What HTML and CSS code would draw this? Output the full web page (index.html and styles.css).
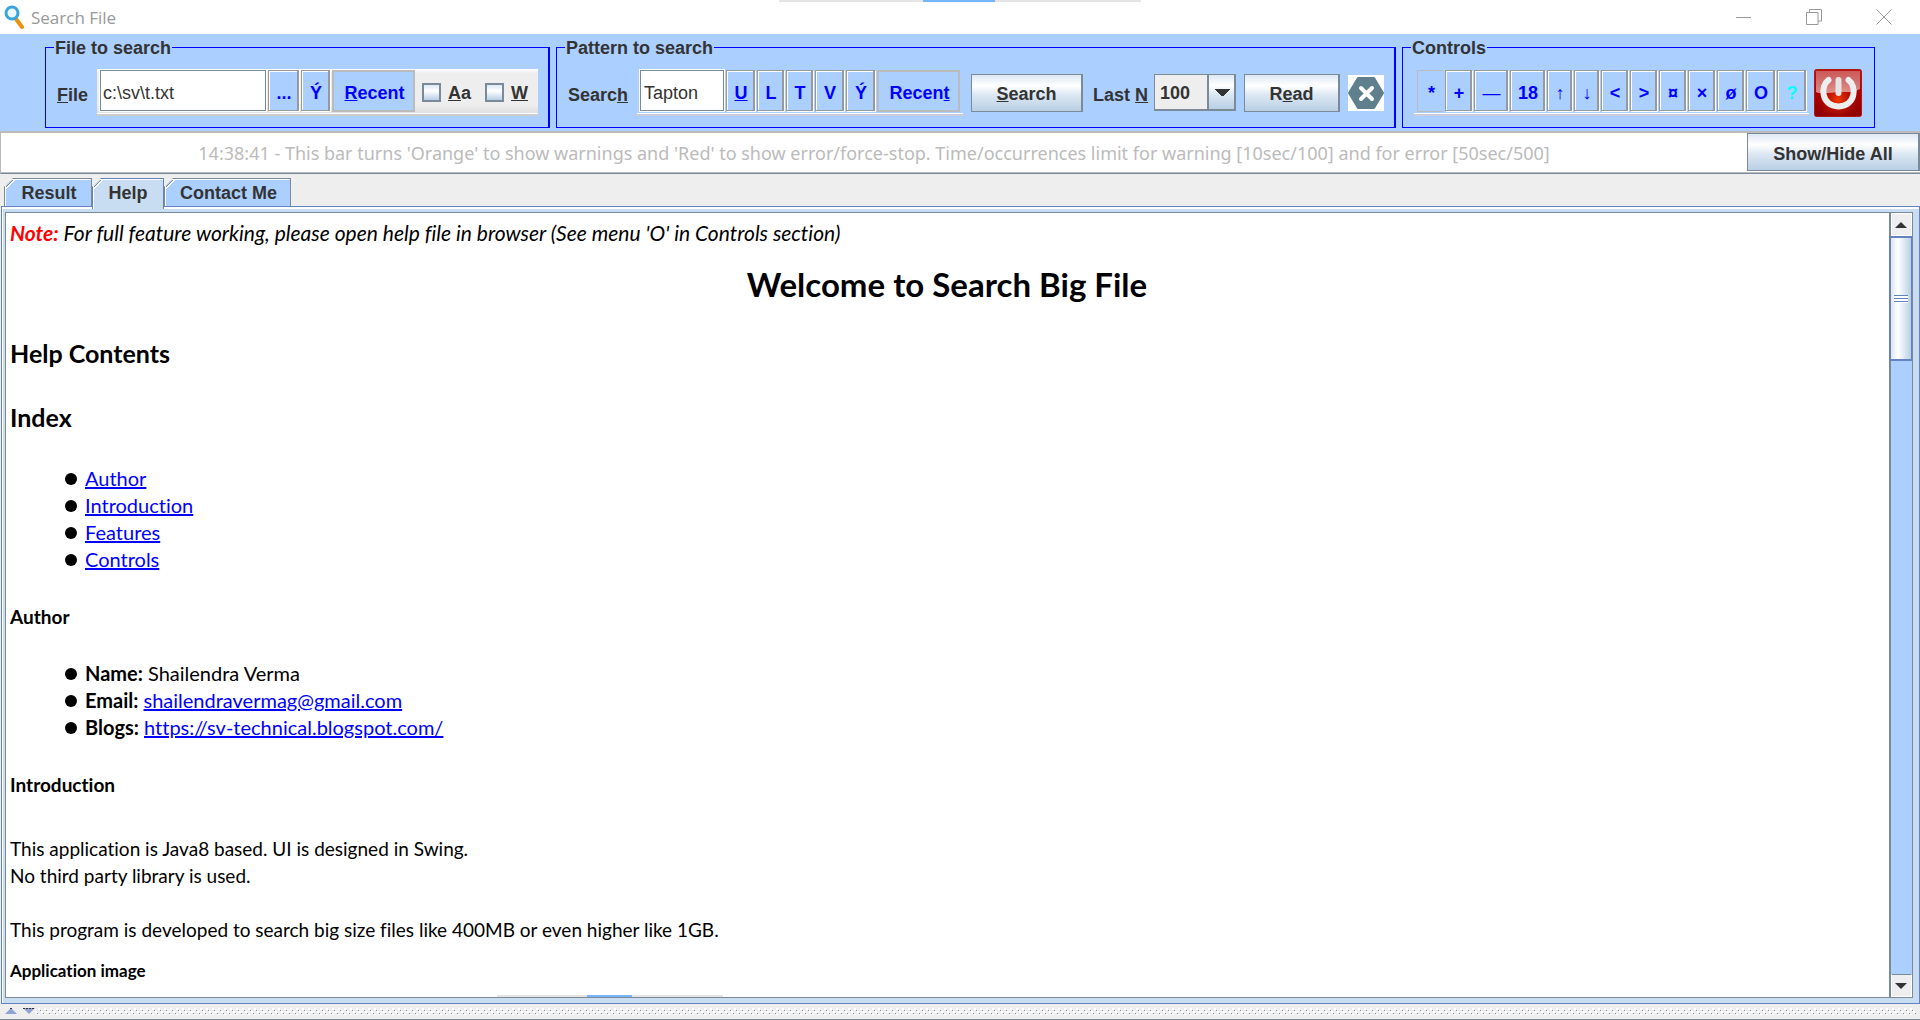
FILE: index.html
```html
<!DOCTYPE html>
<html lang="en">
<head>
<meta charset="utf-8">
<title>Search File</title>
<link rel="stylesheet" href="styles.css">
</head>
<body>
<div class="window">
  <header class="titlebar">
    <svg class="app-icon" width="20" height="24" viewBox="0 0 20 24"><path d="M12 14l6 8" stroke="#e8940f" stroke-width="4" stroke-linecap="round"/><circle cx="8" cy="8" r="6" fill="#eef8fd" stroke="#38a5dc" stroke-width="3"/></svg>
    <h1 class="app-name">Search File</h1>
    <div class="accent"><i></i></div>
    <div class="window-buttons">
      <button aria-label="Minimize"><svg width="16" height="16"><path d="M0 8.500h15"/></svg></button>
      <button aria-label="Restore"><svg width="16" height="16"><path d="M.5 3.500h11.500v12H.5zM3.500 3.500v-3h12v11.500h-3.500"/></svg></button>
      <button aria-label="Close"><svg width="16" height="16"><path d="M.5.5l15 15M15.500.5l-15 15"/></svg></button>
    </div>
  </header>

  <div class="toolbar">
    <fieldset class="group group-file">
      <legend>File to search</legend>
      <label class="text" for="file"><u>F</u>ile</label>
      <div class="strip strip-light">
        <input class="field field-file" id="file" type="text" value="c:\sv\t.txt">
        <button class="key w31">...</button>
        <button class="key w29">Ý</button>
        <button class="flat"><u>R</u>ecent</button>
        <label class="check"><input type="checkbox"><span><u>A</u>a</span></label>
        <label class="check"><input type="checkbox"><span><u>W</u></span></label>
      </div>
    </fieldset>

    <fieldset class="group group-pattern">
      <legend>Pattern to search</legend>
      <label class="text" for="pattern">Searc<u>h</u></label>
      <div class="strip">
        <input class="field field-pattern" id="pattern" type="text" value="Tapton">
        <button class="key w29"><u>U</u></button>
        <button class="key w27">L</button>
        <button class="key w27">T</button>
        <button class="key w29">V</button>
        <button class="key w29">Ý</button>
        <button class="flat">Recen<u>t</u></button>
      </div>
      <button class="metal search"><u>S</u>earch</button>
      <label class="text" for="lastn">Last <u>N</u></label>
      <select class="combo" id="lastn"><option>100</option></select>
      <button class="metal read">R<u>e</u>ad</button>
      <button class="stop" aria-label="Stop"><svg width="36" height="36" viewBox="0 0 36 36"><path d="M10 3h16l9 15-9 15H10L1 18z" fill="#5f7f8d" stroke="#5f7f8d" stroke-width="2" stroke-linejoin="round"/><path d="M13 13l11 11M24 13L13 24" stroke="#fff" stroke-width="4" stroke-linecap="round"/></svg></button>
    </fieldset>

    <fieldset class="group group-controls">
      <legend>Controls</legend>
      <div class="strip strip-keys">
        <button class="flat star">*</button>
        <button class="key w27">+</button>
        <button class="key w34 thin">—</button>
        <button class="key w35">18</button>
        <button class="key w25">↑</button>
        <button class="key w25">↓</button>
        <button class="key w27">&lt;</button>
        <button class="key w27">&gt;</button>
        <button class="key w27">¤</button>
        <button class="key w27">×</button>
        <button class="key w27">ø</button>
        <button class="key w29">O</button>
        <button class="key w29 help">?</button>
      </div>
      <button class="power" aria-label="Exit"><svg width="48" height="48" viewBox="0 0 48 48"><defs><linearGradient id="red" x1="0" y1="0" x2="0" y2="1"><stop offset="0" stop-color="#b81414"/><stop offset=".5" stop-color="#a00"/><stop offset="1" stop-color="#8c0000"/></linearGradient><radialGradient id="glow" cx=".5" cy=".65" r=".45"><stop offset="0" stop-color="#f04000"/><stop offset="1" stop-color="#c01000" stop-opacity="0"/></radialGradient><linearGradient id="gloss" x1="0" y1="0" x2="0" y2="1"><stop offset="0" stop-color="#fff" stop-opacity=".3"/><stop offset="1" stop-color="#fff" stop-opacity=".55"/></linearGradient></defs><rect x=".5" y=".5" width="47" height="47" rx="2" fill="url(#red)" stroke="#b01818"/><rect x="1" y="1" width="46" height="46" fill="url(#glow)"/><path d="M2 2h44v18c-7 4-12 3-20 3S8 26 2 23z" fill="url(#gloss)"/><path d="M14.500 11C6 17 7 37 24.500 37.500 42 37 43 17 34.500 11" fill="none" stroke="#eee" stroke-width="6" stroke-linecap="round"/><path d="M24.500 11v13" stroke="#e4e4e4" stroke-width="6" stroke-linecap="round"/></svg></button>
    </fieldset>
  </div>

  <div class="statusbar">
    <output class="status">14:38:41 - This bar turns 'Orange' to show warnings and 'Red' to show error/force-stop. Time/occurrences limit for warning [10sec/100] and for error [50sec/500]</output>
    <button class="metal toggle">Show/Hide All</button>
  </div>

  <nav class="tabs">
    <button class="tab tab-result">Result</button>
    <button class="tab tab-help active">Help</button>
    <button class="tab tab-contact">Contact Me</button>
  </nav>

  <main class="panel">
    <div class="view">
      <article class="doc">
        <p class="note"><b>Note:</b> For full feature working, please open help file in browser (See menu 'O' in Controls section)</p>
        <h1>Welcome to Search Big File</h1>
        <h2>Help Contents</h2>
        <h2>Index</h2>
        <ul>
          <li><a href="#author">Author</a></li>
          <li><a href="#introduction">Introduction</a></li>
          <li><a href="#features">Features</a></li>
          <li><a href="#controls">Controls</a></li>
        </ul>
        <h3 id="author">Author</h3>
        <ul>
          <li><b>Name:</b> Shailendra Verma</li>
          <li><b>Email:</b> <a href="mailto:shailendravermag@gmail.com">shailendravermag@gmail.com</a></li>
          <li><b>Blogs:</b> <a href="https://sv-technical.blogspot.com/">https://sv-technical.blogspot.com/</a></li>
        </ul>
        <h3 id="introduction">Introduction</h3>
        <p class="body">This application is Java8 based. UI is designed in Swing.<br>No third party library is used.<br><br>This program is developed to search big size files like 400MB or even higher like 1GB.</p>
        <h4>Application image</h4>
      </article>
      <div class="doc-accent"><i></i></div>
      <div class="scrollbar">
        <button class="arrow" aria-label="Scroll up"><svg width="12" height="6"><path d="M6 0l6 6H0z"/></svg></button>
        <div class="thumb"><i class="grip"></i></div>
        <button class="arrow arrow-down" aria-label="Scroll down"><svg width="12" height="6"><path d="M0 0h12L6 6z"/></svg></button>
      </div>
    </div>
  </main>

  <footer class="divider">
    <svg width="30" height="7" viewBox="0 0 30 7"><path d="M0 6l6-6 6 6z" fill="#8ea4d2"/><path d="M18 0h12l-6 6z" fill="#8ea4d2"/><path d="M5 .5h3M18 .5h12" stroke="#333" stroke-dasharray="2 1"/></svg>
    <i class="bumps"></i>
  </footer>
</div>
</body>
</html>
```
FILE: styles.css
```css
* { box-sizing: border-box; }
body { margin: 0; background: #eee; color: #333; font: bold 18px/20px "Liberation Sans", Arial, sans-serif; }
button, input, select { font: inherit; color: inherit; margin: 0; padding: 0; border: 0; border-radius: 0; background: none; }
.window { display: flex; flex-direction: column; min-height: 100vh; }

.titlebar { display: flex; align-items: center; height: 34px; background: #fff; position: relative; padding: 0 28px 0 4px; }
.app-icon { fill: none; }
.app-name { margin: 0 auto 0 7px; padding-top: 2px; font: 17px/24px "Open Sans", sans-serif; color: #999; }
.accent { position: absolute; top: 0; left: 779px; width: 362px; height: 2px; background: #e5e5e5; }
.accent i { display: block; margin-left: 144px; width: 72px; height: 2px; background: #78b6fb; }
.window-buttons { display: flex; gap: 54px; }
.window-buttons button { width: 16px; height: 16px; }
.window-buttons svg { display: block; fill: none; stroke: #999; }

.toolbar { display: flex; justify-content: center; gap: 6px; height: 97px; padding: 2px 0 0; background: #abcfff; }
.group { display: flex; align-items: center; position: relative; margin: 0; padding: 0 8px; border: 1px solid #00f; border-right-width: 2px; min-width: 0; height: 92px; }
.group legend { padding: 0 1px; height: 22px; line-height: 24px; }
.group-file { width: 505px; }
.group-pattern { width: 840px; }
.group-controls { width: 473px; border-right-width: 1px; }
.text { white-space: nowrap; padding: 4px 0 0 3px; }
.strip { display: flex; align-items: flex-start; gap: 2px; height: 47px; padding: 1px 3px; border-bottom: 2px solid #ccd; box-shadow: inset 0 -1px #fff; margin: 0 8px 0 9px; }
.strip-light { margin: 0 0 0 9px; background: linear-gradient(#fff, #eee 4px, #eee 80%, #ddd); border-bottom-color: #ccc; padding-right: 10px; }
.field { height: 41px; padding: 5px 4px 0 3px; font-weight: normal; background: #fff; border: 1px solid #7a8a99; outline: 1px solid #fff; }
.field-file { width: 166px; padding: 5px 2px 0; }
.field-pattern { width: 84px; }
.key, .flat { height: 41px; padding: 4px 0 0 2px; background: #abcfff; color: #00f; border: 1px solid #999; border-right-width: 2px; box-shadow: inset 1px 1px #fff, 1px 1px #fff; }
.flat { width: 83px; height: 42px; border: 2px solid #bbb; box-shadow: none; }
.w25 { width: 25px; } .w27 { width: 27px; } .w29 { width: 29px; } .w31 { width: 31px; } .w34 { width: 34px; } .w35 { width: 35px; }
.thin { font-weight: normal; }
.help { color: #0ff; }
.star { width: 26px; border-width: 1px 0 1px 1px; }
.check { display: flex; align-items: center; height: 42px; gap: 7px; margin-left: 5px; padding-top: 2px; }
.check + .check { margin-left: 12px; }
.check span { padding-top: 2px; }
.check input { appearance: none; width: 19px; height: 19px; border: 2px solid #7a8a99; background: linear-gradient(#dde8f3, #fff 40%, #b8cfe5); }
.metal { height: 38px; border: 1px solid #7a8a99; border-right-width: 2px; background: linear-gradient(#dde8f3, #fff 30%, #dde8f3 55%, #b8cfe5); padding-top: 2px; }
.search { width: 112px; margin-right: 7px; }
.combo { appearance: none; width: 82px; height: 37px; margin: 0 8px 0 6px; padding: 2px 0 0 5px; border: 2px solid #7a8a99; border-width: 1px 2px 2px 1px; background: linear-gradient(#7a8a99, #7a8a99) 52px 0 / 2px 100% no-repeat, conic-gradient(from -45deg at 50% 100%, #333 90deg, transparent 0) 59px 14px / 16px 8px no-repeat, linear-gradient(#eee, #eee) 0 0 / 52px 100% no-repeat, linear-gradient(#dde8f3, #fff 30%, #dde8f3 55%, #b8cfe5); }
.read { width: 96px; margin-right: 8px; }
.stop { width: 36px; height: 36px; background: #fff; }
.stop svg, .power svg { display: block; }
.strip-keys { margin: 0 5px 0 3px; }

.statusbar { display: flex; height: 43px; background: #fff; border: 2px solid #bbb; border-left-width: 1px; border-bottom: 1px solid #7a8a99; border-right: 0; box-shadow: inset 0 -1px #bbb; }
.status { flex: 1; text-align: center; font: 18px/41px "Noto Sans", sans-serif; color: #bbb; white-space: nowrap; }
.toggle { width: 173px; padding-top: 3px; }

.tabs { display: flex; padding: 4px 0 0 4px; height: 32px; }
.tab { position: relative; height: 28px; background: linear-gradient(135deg, transparent 6px, #7a8a99 6px 7px, #fff 7px 8px, transparent 8px), #abcfff; border: 1px solid #7a8a99; border-bottom: 0; box-shadow: inset 1px 1px #fff; padding: 0 0 0 2px; clip-path: polygon(9px 0, 100% 0, 100% 100%, 0 100%, 0 9px); }
.tab-result { width: 88px; } .tab-help { width: 72px; } .tab-contact { width: 127px; }
.tab.active { height: 31px; padding: 0 0 3px; background-color: #c8ddf2; border-color: #6382bf; z-index: 1; }

.panel { flex: 1; margin: 0 0 0 1px; padding: 5px 6px 5px 3px; background: #c8ddf2; border: 1px solid #6382bf; display: flex; box-shadow: inset 1px 2px #fff; }
.view { position: relative; flex: 1; display: flex; background: #fff; border: 1px solid #7a8a99; }
.doc { flex: 1; padding: 6px 5px 7px 4px; color: #000; font: 19px/27px Lato, sans-serif; font-variant-ligatures: none; }
.doc p { margin: 0; }
.note { font-style: italic; font-size: 21px; }
.note b { color: #f00; }
.doc h1 { margin: 18px 0 33px; text-align: center; font-size: 33px; line-height: 40px; }
.doc h2 { margin: 0 0 32px; font-size: 25px; line-height: 32px; }
.doc h3 { margin: 30px 0; font-size: 19px; line-height: 27px; }
.doc h4 { margin: 16px 0 0; font-size: 17px; line-height: 24px; }
.doc ul { margin: 0; padding: 0 0 0 75px; list-style: none; font-size: 20px; }
.doc li { position: relative; }
.doc li::before { content: ""; position: absolute; left: -20px; top: 8px; width: 12px; height: 12px; border-radius: 50%; background: #000; }
.doc a { color: #00f; }
.doc .body { padding-top: 7px; }
.scrollbar { width: 23px; display: flex; flex-direction: column; background: #abcfff; border-left: 2px solid #7a8a99; }
.arrow { height: 23px; background: #eee; border: 1px solid #fff; padding-right: 2px; }
.arrow svg { display: block; margin: auto; fill: #333; }
.arrow-down { margin-top: auto; border-top: 1px solid #7a8a99; }
.thumb { height: 125px; margin-left: -2px; display: grid; place-items: center; border: 2px solid #6382bf; border-right-width: 1px; background: linear-gradient(90deg, #dde8f3, #fff 35%, #b8cfe5); }
.grip { width: 14px; height: 8px; background: repeating-linear-gradient(#6382bf 0 1px, #fff 1px 3px); }
.doc-accent { position: absolute; left: 491px; bottom: 0; width: 226px; height: 2px; background: #e5e5e5; }
.doc-accent i { display: block; margin-left: 90px; width: 45px; height: 2px; background: #78b6fb; }

.divider { display: flex; height: 16px; padding: 4px 4px 4px 5px; border-bottom: 1px solid #7a8a99; }
.bumps { flex: 1; height: 7px; background: conic-gradient(from 270deg at 1px 1px, #7a8a99 90deg, transparent 0) 5px 2px / 6px 6px, conic-gradient(from 270deg at 1px 1px, #7a8a99 90deg, transparent 0) 2px 5px / 6px 6px, conic-gradient(from 270deg at 2px 2px, #fff 90deg, transparent 0) 3px 0 / 6px 6px, conic-gradient(from 270deg at 2px 2px, #fff 90deg, transparent 0) 0 3px / 6px 6px; }
```
